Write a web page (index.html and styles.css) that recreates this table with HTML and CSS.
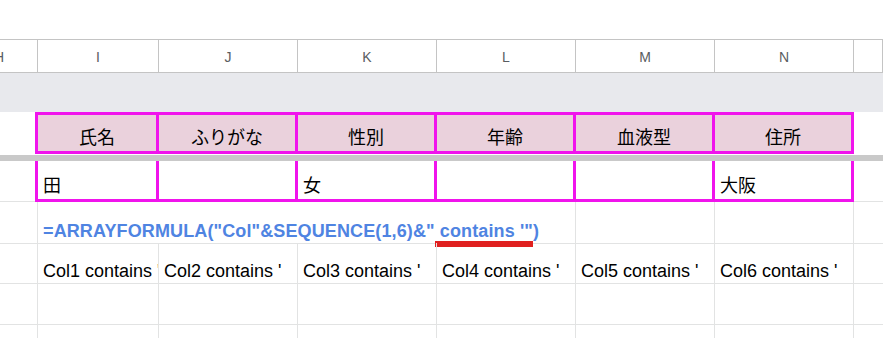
FILE: index.html
```html
<!DOCTYPE html>
<html lang="ja">
<head>
<meta charset="utf-8">
<title>Sheet</title>
<link rel="stylesheet" href="styles.css">
</head>
<body>
<div class="sheet">
  <div class="topgap"></div>
  <div class="row colhead">
    <div class="hc">H</div>
    <div class="hc">I</div>
    <div class="hc">J</div>
    <div class="hc">K</div>
    <div class="hc">L</div>
    <div class="hc">M</div>
    <div class="hc">N</div>
    <div class="hc"></div>
  </div>
  <div class="band"></div>
  <div class="frow fhead">
    <div class="lead"></div>
    <div class="box box-head">
      <div class="pc w1">氏名</div>
      <div class="pc">ふりがな</div>
      <div class="pc">性別</div>
      <div class="pc">年齢</div>
      <div class="pc">血液型</div>
      <div class="pc">住所</div>
    </div>
    <div class="tail"></div>
  </div>
  <div class="freeze"></div>
  <div class="frow fdata">
    <div class="lead line"></div>
    <div class="box box-data">
      <div class="pc w1">田</div>
      <div class="pc"></div>
      <div class="pc">女</div>
      <div class="pc"></div>
      <div class="pc"></div>
      <div class="pc">大阪</div>
    </div>
    <div class="tail line"></div>
  </div>
  <div class="row">
    <div class="c"></div>
    <div class="c span4 formula">=ARRAYFORMULA("Col"&amp;SEQUENCE(1,6)&amp;"<span class="mark"> contains '"</span>)</div>
    <div class="c"></div>
    <div class="c"></div>
    <div class="c last"></div>
  </div>
  <div class="row">
    <div class="c"></div>
    <div class="c">Col1 contains '</div>
    <div class="c">Col2 contains '</div>
    <div class="c">Col3 contains '</div>
    <div class="c">Col4 contains '</div>
    <div class="c">Col5 contains '</div>
    <div class="c">Col6 contains '</div>
    <div class="c last"></div>
  </div>
  <div class="row">
    <div class="c"></div><div class="c"></div><div class="c"></div><div class="c"></div>
    <div class="c"></div><div class="c"></div><div class="c"></div><div class="c last"></div>
  </div>
  <div class="row">
    <div class="c"></div><div class="c"></div><div class="c"></div><div class="c"></div>
    <div class="c"></div><div class="c"></div><div class="c"></div><div class="c last"></div>
  </div>
</div>
</body>
</html>
```
FILE: styles.css
```css
html, body {
  margin: 0;
  padding: 0;
  background: #ffffff;
  overflow: hidden;
}

body {
  font-family: "Liberation Sans", "Noto Sans CJK JP", Arial, sans-serif;
  color: #000000;
}

.sheet {
  width: 922px;
  margin-left: -39px;
}

.topgap {
  height: 39px;
}

.row {
  display: grid;
  grid-template-columns: 77px 121px repeat(5, 139px) 1fr;
  height: 41px;
}

.colhead {
  height: 34px;
  border-top: 1px solid #c4c4c4;
  border-bottom: 1px solid #c4c4c4;
  box-sizing: border-box;
}

.hc {
  border-right: 1px solid #c4c4c4;
  display: flex;
  align-items: center;
  justify-content: center;
  font-size: 14px;
  color: #5a5d61;
  padding-top: 1px;
}

.band {
  height: 39px;
  background: #e8e9ed;
}

.frow {
  display: flex;
}

.fhead {
  height: 42px;
}

.fdata {
  height: 41px;
}

.freeze {
  height: 6px;
  margin-top: 1px;
  background: #c9c9c9;
}

.lead {
  width: 74px;
  flex: none;
}

.tail {
  flex: 1;
}

.line {
  border-bottom: 1px solid #e2e3e3;
  box-sizing: border-box;
}

.box {
  display: flex;
  gap: 3px;
  background: #f014ec;
  flex: none;
}

.box-head {
  padding: 3px;
}

.box-data {
  padding: 0 3px 3px 3px;
}

.pc {
  width: 136px;
  flex: none;
  display: flex;
  align-items: flex-end;
  font-size: 18px;
  line-height: 20px;
  padding-bottom: 2px;
  box-sizing: border-box;
  background: #ffffff;
  white-space: nowrap;
}

.pc.w1 {
  width: 118px;
}

.box-head .pc {
  background: #ead1dc;
  justify-content: center;
  padding-bottom: 3px;
}

.box-data .pc {
  padding-left: 5px;
  padding-bottom: 3px;
}

.c {
  border-right: 1px solid #e2e3e3;
  border-bottom: 1px solid #e2e3e3;
  display: flex;
  align-items: flex-end;
  padding: 0 0 2px 5px;
  box-sizing: border-box;
  font-size: 18px;
  line-height: 20px;
  white-space: nowrap;
  overflow: hidden;
}

.c.last {
  border-right: none;
}

.span4 {
  grid-column: span 4;
  overflow: visible;
}

.formula {
  font-weight: bold;
  color: #4f84e2;
  display: block;
  padding-top: 19px;
  letter-spacing: 0.12px;
}

.mark {
  border-bottom: 6px solid #e0201f;
}
```
